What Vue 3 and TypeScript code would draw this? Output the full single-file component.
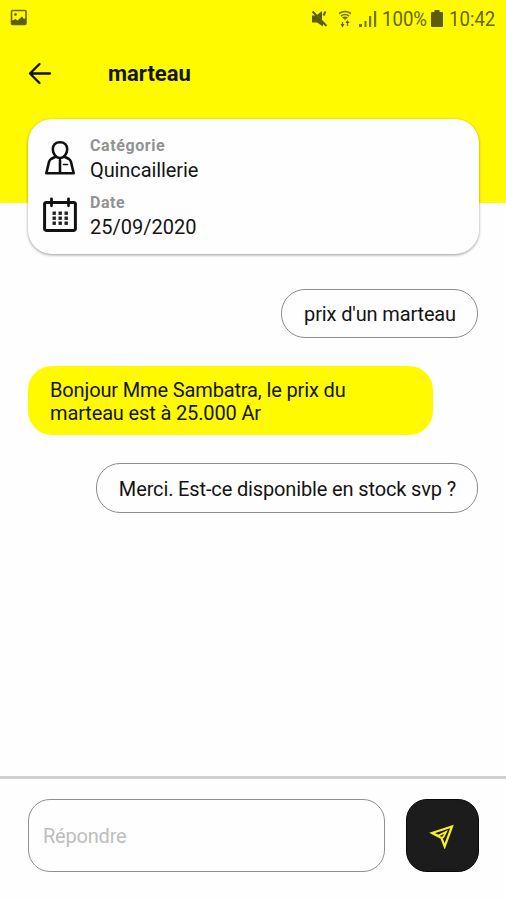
<script setup lang="ts">
interface Message {
  id: number
  own: boolean
  lines: string[]
}

const messages: Message[] = [
  { id: 1, own: true, lines: ["prix d'un marteau"] },
  { id: 2, own: false, lines: ['Bonjour Mme Sambatra, le prix du', 'marteau est à 25.000 Ar'] },
  { id: 3, own: true, lines: ['Merci. Est-ce disponible en stock svp ?'] },
]

const dotRows = [16, 21, 26]
const dotColumns = [11, 17, 23]
</script>

<template>
  <div class="screen">
    <header class="top">
      <div class="status">
        <svg class="photo" width="18" height="18" viewBox="0 0 18 18">
          <rect x="1.500" y="1.500" width="14.500" height="14" rx="1" fill="none" stroke="#6d6c0b" stroke-width="1.600" />
          <path d="M1.500 12l4-2 2 1.500L12 7.500l2 2.500 2-1v6.500H1.500z" fill="#5d5c0b" />
          <circle cx="5.500" cy="5.500" r="1.300" fill="#5d5c0b" />
        </svg>
        <div class="indicators">
          <svg class="mute" width="17" height="18" viewBox="0 0 17 18" fill="#5d5c0b">
            <path d="M1 5.500h4L12 12v4.500L6 12.500H1z" />
            <path d="M6 5l5-4v9z" />
            <path d="M1.500 1.500L15.500 16M12.500 5.500l2-4" fill="none" stroke="#5d5c0b" stroke-width="2" />
          </svg>
          <svg class="wifi" width="14" height="18" viewBox="0 0 14 18" fill="none" stroke="#77760c">
            <path d="M1 3.500Q7-.5 13 3.500M3 6Q7 3 11 6" stroke-width="1.600" />
            <path d="M4 7.500q3-2 6 0L7 10z" fill="#77760c" stroke="none" />
            <path d="M4.500 12v5M9.500 16v-5" stroke-width="1.300" />
            <path d="M2.500 14h4l-2 3zM7.500 13h4l-2-3z" fill="#5d5c0b" stroke="none" />
          </svg>
          <svg class="signal" width="18" height="18" viewBox="0 0 18 18" fill="#77760c">
            <path d="M0 14h3v3H0zM5.500 11h2v6h-2zM10 6h2.200v11H10zM15 1h2.200v16H15z" />
          </svg>
          <span class="percent"><span class="narrow">100%</span></span>
          <svg class="battery" width="12" height="18" viewBox="0 0 12 18" fill="#5d5c0b">
            <path d="M3.500 0h5v2H11q1 0 1 1v13q0 1-1 1H1q-1 0-1-1V3q0-1 1-1h2.500z" />
          </svg>
          <span class="clock"><span class="narrow">10:42</span></span>
        </div>
      </div>
      <div class="toolbar">
        <svg width="24" height="24" viewBox="0 0 24 24" fill="none" stroke="#111" stroke-width="2.300" stroke-linecap="round" stroke-linejoin="round">
          <path d="M22 11.500H2M11.500 2L2 11.500l9.500 9.500" />
        </svg>
        <h1 class="title">marteau</h1>
      </div>
    </header>

    <section class="card">
      <div class="info">
        <svg class="info-icon" width="34" height="36" viewBox="0 0 34 36" fill="none" stroke="#111" stroke-width="2.600" stroke-linejoin="round" stroke-linecap="round">
          <path d="M17 2.200C12.500 2.200 9.800 5.300 9.800 9.200c0 4.300 3.200 8.800 7.200 8.800s7.200-4.500 7.200-8.800c0-3.900-2.700-7-7.200-7z" />
          <path d="M12 17L8 19c-1 .6-1.600 1.700-2 3L3.300 33.200h27.400L28 22c-.4-1.300-1-2.400-2-3l-4-2M17 20v13" />
          <path d="M20.500 24.500h4" stroke-width="1.600" />
        </svg>
        <div>
          <div class="label">Catégorie</div>
          <div class="value trade">Quincaillerie</div>
        </div>
      </div>
      <div class="info">
        <svg class="info-icon" width="34" height="36" viewBox="0 0 34 36">
          <rect x="1.600" y="5.400" width="30.800" height="28" rx="1.800" fill="none" stroke="#111" stroke-width="3" />
          <path d="M8.500 1.800v7M25.500 1.800v7" stroke="#111" stroke-width="2.800" stroke-linecap="round" />
          <template v-for="y in dotRows" :key="y">
            <rect v-for="x in dotColumns" :key="x" :x="x - 1.500" :y="y - 1.500" width="3.400" height="3.400" fill="#222" />
          </template>
        </svg>
        <div>
          <div class="label">Date</div>
          <div class="value">25/09/2020</div>
        </div>
      </div>
    </section>

    <main class="chat">
      <div v-for="m in messages" :key="m.id" class="bubble" :class="m.own ? 'own' : 'reply'">
        <div v-for="line in m.lines" :key="line">{{ line }}</div>
      </div>
    </main>

    <footer class="composer">
      <input class="field" type="text" placeholder="Répondre" />
      <button class="send" type="button" aria-label="Envoyer">
        <svg width="26" height="26" viewBox="0 0 26 26" fill="none" stroke="#f6ef28" stroke-width="2.200" stroke-linejoin="miter">
          <path d="M3 10L23 3.500l-7.300 20L12.500 15z" />
          <path d="M3 10l6.500 2.500L17 9l-2.500 5-2 1" stroke-width="1.800" />
        </svg>
      </button>
    </footer>
  </div>
</template>

<style>
body {
  margin: 0;
}
</style>

<style scoped>
.screen {
  width: 506px;
  height: 900px;
  display: flex;
  flex-direction: column;
  overflow: hidden;
  background: #fefefe;
  color: #141414;
  font-family: Roboto, 'Liberation Sans', sans-serif;
}

.top {
  flex: none;
  height: 203px;
  background: #fffa00;
}

.status {
  display: flex;
  justify-content: space-between;
  height: 37px;
  padding: 0 10px 0 10px;
  box-sizing: border-box;
}

.photo {
  margin-top: 9px;
}

.indicators {
  display: flex;
  align-items: center;
  color: #66650b;
  font-size: 20px;
  white-space: nowrap;
}

.wifi {
  margin-left: 10px;
}

.signal {
  margin-left: 7px;
}

.percent {
  width: 45px;
  margin-left: 5px;
}

.battery {
  margin-left: 4px;
}

.clock {
  width: 47px;
  margin-left: 6px;
}

.narrow {
  display: inline-block;
  transform: scaleX(0.93);
  transform-origin: left center;
}

.toolbar {
  display: flex;
  align-items: center;
  height: 73px;
  padding-left: 28px;
}

.title {
  margin: 0 0 0 56px;
  font-size: 22px;
  font-weight: 700;
  line-height: 30px;
}

.card {
  flex: none;
  height: 135px;
  box-sizing: border-box;
  margin: -84px 27px 0 28px;
  padding: 16px 15px 0;
  border-radius: 24px;
  background: #fefefe;
  box-shadow: 0 1px 3px rgba(0, 0, 0, 0.4);
}

.info {
  display: flex;
  gap: 13px;
  height: 57px;
}

.info-icon {
  margin-top: 5px;
}

.label {
  color: #929292;
  font-size: 16px;
  font-weight: 700;
  letter-spacing: 0.58px;
  line-height: 21px;
}

.value {
  font-size: 20px;
  line-height: 28px;
}

.trade {
  letter-spacing: -0.1px;
}

.chat {
  flex: 1;
  display: flex;
  flex-direction: column;
  align-items: flex-start;
  gap: 28px;
  padding: 35px 28px 0 28px;
  font-size: 20px;
  letter-spacing: -0.14px;
}

.bubble {
  box-sizing: border-box;
  border-radius: 24px;
  white-space: nowrap;
}

.own {
  align-self: flex-end;
  height: 49px;
  padding: 0 21px 0 22px;
  border: 1px solid #8c8c8c;
  line-height: 48px;
}

.own:last-child {
  height: 50px;
  line-height: 50px;
}

.reply {
  width: 405px;
  height: 69px;
  padding: 13px 22px;
  background: #fffa00;
  line-height: 23px;
}

.composer {
  flex: none;
  display: flex;
  align-items: flex-start;
  justify-content: space-between;
  height: 124px;
  box-sizing: border-box;
  padding: 20px 27px 0 28px;
  border-top: 3px solid #cfcfcf;
}

.field {
  width: 357px;
  height: 73px;
  box-sizing: border-box;
  padding: 0 14px;
  border: 1px solid #909090;
  border-radius: 22px;
  outline: none;
  background: transparent;
  color: #141414;
  font: 20px Roboto, 'Liberation Sans', sans-serif;
  letter-spacing: -0.2px;
}

.field::placeholder {
  color: #bdbdbd;
  opacity: 1;
}

.send {
  display: flex;
  align-items: center;
  justify-content: center;
  width: 73px;
  height: 73px;
  padding: 0 2px 0 0;
  border: 1px solid #080808;
  border-radius: 21px;
  background: #1c1c1c;
}
</style>
